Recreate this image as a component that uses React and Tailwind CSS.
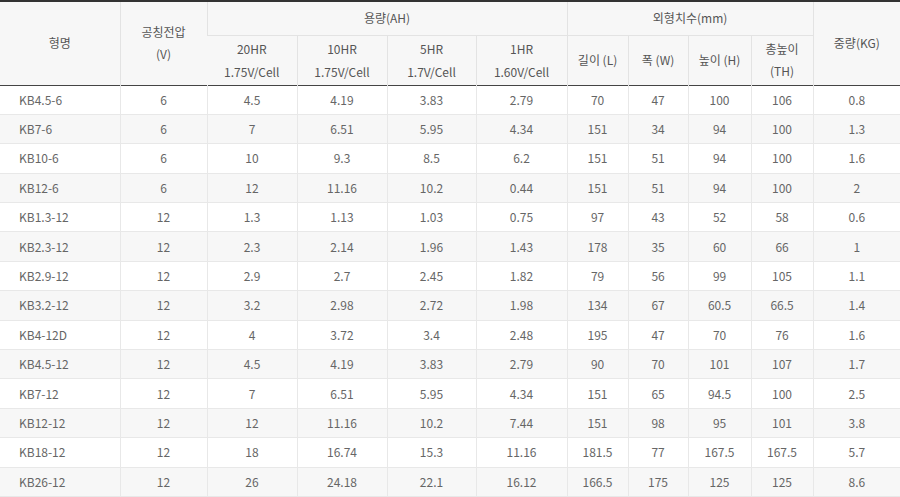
import React from 'react';

const rows = [
  ['KB4.5-6', '6', '4.5', '4.19', '3.83', '2.79', '70', '47', '100', '106', '0.8'],
  ['KB7-6', '6', '7', '6.51', '5.95', '4.34', '151', '34', '94', '100', '1.3'],
  ['KB10-6', '6', '10', '9.3', '8.5', '6.2', '151', '51', '94', '100', '1.6'],
  ['KB12-6', '6', '12', '11.16', '10.2', '0.44', '151', '51', '94', '100', '2'],
  ['KB1.3-12', '12', '1.3', '1.13', '1.03', '0.75', '97', '43', '52', '58', '0.6'],
  ['KB2.3-12', '12', '2.3', '2.14', '1.96', '1.43', '178', '35', '60', '66', '1'],
  ['KB2.9-12', '12', '2.9', '2.7', '2.45', '1.82', '79', '56', '99', '105', '1.1'],
  ['KB3.2-12', '12', '3.2', '2.98', '2.72', '1.98', '134', '67', '60.5', '66.5', '1.4'],
  ['KB4-12D', '12', '4', '3.72', '3.4', '2.48', '195', '47', '70', '76', '1.6'],
  ['KB4.5-12', '12', '4.5', '4.19', '3.83', '2.79', '90', '70', '101', '107', '1.7'],
  ['KB7-12', '12', '7', '6.51', '5.95', '4.34', '151', '65', '94.5', '100', '2.5'],
  ['KB12-12', '12', '12', '11.16', '10.2', '7.44', '151', '98', '95', '101', '3.8'],
  ['KB18-12', '12', '18', '16.74', '15.3', '11.16', '181.5', '77', '167.5', '167.5', '5.7'],
  ['KB26-12', '12', '26', '24.18', '22.1', '16.12', '166.5', '175', '125', '125', '8.6'],
];

const th = 'border-l border-[#e3e3e3] first:border-l-0 font-normal text-[#555] align-middle';

export default function App() {
  return (
    <div className="w-[900px] h-[497px] overflow-hidden bg-white" style={{ fontFamily: '"Noto Sans CJK KR", "Noto Sans", sans-serif' }}>
      <table className="w-[900px] table-fixed border-collapse text-[12px] text-center">
        <colgroup>
          <col className="w-[120px]" />
          <col className="w-[87px]" />
          <col className="w-[90px]" />
          <col className="w-[90px]" />
          <col className="w-[89px]" />
          <col className="w-[91px]" />
          <col className="w-[61px]" />
          <col className="w-[60px]" />
          <col className="w-[63px]" />
          <col className="w-[62px]" />
          <col className="w-[87px]" />
        </colgroup>
        <thead className="bg-[#f7f7f7] border-t-2 border-[#333]">
          <tr className="h-[34px]">
            <th rowSpan={2} className={th + ' border-l-0'}>형명</th>
            <th rowSpan={2} className={th + ' leading-[22px]'}>공칭전압<br />(V)</th>
            <th colSpan={4} className={th + ' border-b border-b-[#e3e3e3]'}>용량(AH)</th>
            <th colSpan={4} className={th + ' border-b border-b-[#e3e3e3]'}>외형치수(mm)</th>
            <th rowSpan={2} className={th}>중량(KG)</th>
          </tr>
          <tr className="h-[50px] border-b border-[#444]">
            <th className={th + ' border-l leading-[23px]'}>20HR<br />1.75V/Cell</th>
            <th className={th + ' border-l leading-[23px]'}>10HR<br />1.75V/Cell</th>
            <th className={th + ' border-l leading-[23px]'}>5HR<br />1.7V/Cell</th>
            <th className={th + ' border-l leading-[23px]'}>1HR<br />1.60V/Cell</th>
            <th className={th + ' border-l'}>길이 (L)</th>
            <th className={th + ' border-l'}>폭 (W)</th>
            <th className={th + ' border-l'}>높이 (H)</th>
            <th className={th + ' border-l leading-[22px]'}>총높이<br />(TH)</th>
          </tr>
        </thead>
        <tbody className="text-[#666]">
          {rows.map((r, i) => (
            <tr key={r[0]} className={'h-[29.4px] border-b border-[#e8e8e8] ' + (i % 2 === 1 ? 'bg-[#f7f7f7]' : 'bg-white')}>
              {r.map((c, j) => (
                <td key={j} className={j === 0 ? 'text-left pl-[19px]' : 'border-l border-[#e8e8e8]'}>{c}</td>
              ))}
            </tr>
          ))}
        </tbody>
      </table>
    </div>
  );
}
